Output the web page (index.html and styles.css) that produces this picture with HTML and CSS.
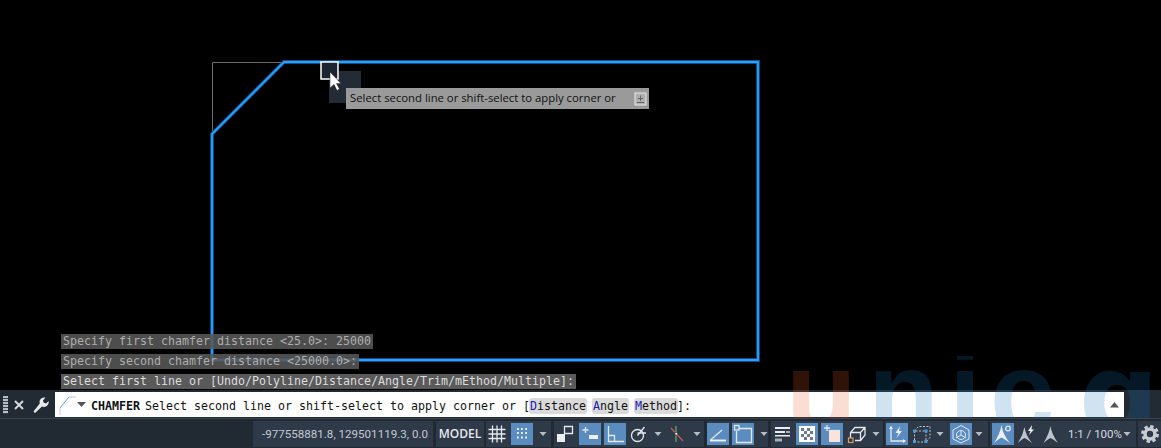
FILE: index.html
```html
<!DOCTYPE html>
<html lang="en">
<head>
<meta charset="utf-8">
<title>CHAMFER</title>
<link rel="stylesheet" href="styles.css">
</head>
<body>
<div class="app">
  <main class="canvas">
    <svg class="drawing" width="1161" height="390" viewBox="0 0 1161 390">
      <path class="ghost" d="M212.500 134V62.500H284"/>
      <path class="edge-outer" d="M212 134L284 62H758V360H212Z"/>
      <path class="edge-inner" d="M212 134L284 62H758V360H212Z"/>
      <rect class="badge" x="329" y="71" width="32" height="32"/>
      <rect class="pickbox" x="321" y="62" width="17" height="17"/>
      <path class="cursor" d="M330 72V88L334 84.500L337 90.500L339.500 89L336.500 83.500H341Z"/>
    </svg>
    <div class="tooltip">
      <span>Select second line or shift-select to apply corner or</span>
      <svg class="tip-icon" width="13" height="14" viewBox="0 0 13 14"><rect x="1" y="1" width="11" height="12" class="tip-box"/><path d="M6.500 3.500V9M4 6.500H9M3 10.500H10" class="tip-plus"/></svg>
    </div>
    <div class="history">
      <div class="hline">Specify first chamfer distance &lt;25.0&gt;: 25000</div>
      <div class="hline">Specify second chamfer distance &lt;25000.0&gt;:</div>
      <div class="hline hline-last">Select first line or [Undo/Polyline/Distance/Angle/Trim/mEthod/Multiple]:</div>
    </div>
  </main>

  <section class="cmdbar">
    <div class="grip"></div>
    <svg class="cmd-x" width="12" height="12" viewBox="0 0 12 12"><path d="M2 2L10 10M10 2L2 10"/></svg>
    <svg class="cmd-wrench" width="18" height="18" viewBox="0 0 18 18"><path d="M1.500 15.500L3 17L10 10.500C12.500 11.500 15.500 10.500 16.500 7.500L16.800 5L14 7.500L11.500 6.500L11 4.500L13.500 1.500C10.500 1 8 2.500 7.500 5.500L7.800 7.500Z"/></svg>
    <div class="cmd-input">
      <svg class="cmd-icon" width="20" height="22" viewBox="0 0 20 22"><path class="ci-gray" d="M2 21V14M11 3H18"/><path class="ci-blue" d="M2 14L11 3"/></svg>
      <svg class="cmd-drop" width="9" height="6" viewBox="0 0 9 6"><path d="M0 0H9L4.500 5Z"/></svg>
      <div class="cmd-text"><b>CHAMFER</b> Select second line or shift-select to apply corner or [<span class="opt"><i>D</i>istance</span> <span class="opt"><i>A</i>ngle</span> <span class="opt"><i>M</i>ethod</span>]:</div>
      <svg class="cmd-up" width="9" height="6" viewBox="0 0 9 6"><path d="M0 5.500H9L4.500 0Z"/></svg>
    </div>
  </section>

  <svg class="watermark" width="400" height="90" viewBox="0 0 400 90" aria-hidden="true">
    <text class="wm-u" x="25" y="77">u</text>
    <text class="wm-b" x="107" y="77">n</text>
    <text class="wm-b" x="188" y="77">i</text>
    <text class="wm-b" x="229" y="77">c</text>
    <text class="wm-b wm-a" x="318" y="77">ɑ</text>
  </svg>

  <footer class="status">
    <div class="group coords">-977558881.8, 129501119.3, 0.0</div>
    <div class="group model">MODEL</div>

    <div class="group g-grid">
      <span class="btn"><svg viewBox="0 0 22 22"><path class="ln" d="M6.500 2.500V19.500M11 2.500V19.500M15.500 2.500V19.500M2.500 6.500H19.500M2.500 11H19.500M2.500 15.500H19.500"/></svg></span>
      <span class="btn on"><svg viewBox="0 0 22 22"><path class="dots" d="M6 6H7.800M10 6H11.800M14.200 6H16M6 10H7.800M10 10H11.800M14.200 10H16M6 14.500H7.800M10 14.500H11.800M14.200 14.500H16"/></svg></span>
      <span class="arrow"><svg viewBox="0 0 14 22"><path class="tri" d="M3.500 9H10.500L7 13Z"/></svg></span>
    </div>

    <div class="group g-b">
      <span class="btn"><svg viewBox="0 0 22 22"><rect class="fl" x="3" y="11" width="8" height="8"/><path class="ln" d="M10.500 11V3.500H18.500V10.500H11"/></svg></span>
      <span class="btn on"><svg viewBox="0 0 22 22"><path class="ln" d="M6.500 4V10M3.500 7H9.500"/><rect class="fl" x="10" y="12" width="9" height="4"/></svg></span>
      <span class="btn on"><svg viewBox="0 0 22 22"><path class="ln" d="M4.500 3V18.500H20M4.500 12.500H10.500V18.500"/></svg></span>
      <span class="btn"><svg viewBox="0 0 22 22"><circle class="ln" cx="8.500" cy="12.500" r="6"/><path class="ln" d="M8.500 12.500L15.500 4M8.500 10H17"/></svg></span>
      <span class="arrow pull"><svg viewBox="0 0 14 22"><path class="tri" d="M3.500 9H10.500L7 13Z"/></svg></span>
      <span class="btn"><svg viewBox="0 0 22 22"><path class="grn" d="M8 3V19"/><path class="red" d="M3 5L15 18"/><rect class="pt" x="7" y="9.500" width="2.500" height="2.500"/></svg></span>
      <span class="arrow pull"><svg viewBox="0 0 14 22"><path class="tri" d="M3.500 9H10.500L7 13Z"/></svg></span>
    </div>

    <div class="group g-c">
      <span class="btn on"><svg viewBox="0 0 22 22"><path class="ln" d="M3.500 17L15 7"/><rect class="fl" x="3" y="16.500" width="16" height="2"/></svg></span>
      <span class="btn on"><svg viewBox="0 0 22 22"><path class="ln" d="M7 5.500H19.500V19.500H4.500V8"/><rect class="ln" x="2.500" y="2.500" width="4.500" height="4.500"/></svg></span>
      <span class="arrow"><svg viewBox="0 0 14 22"><path class="tri" d="M3.500 9H10.500L7 13Z"/></svg></span>
    </div>

    <div class="group g-d">
      <span class="btn"><svg viewBox="0 0 22 22"><rect class="fl" x="4" y="4" width="15" height="2"/><rect class="fl" x="4" y="8" width="10" height="2"/><rect class="fl2" x="15" y="8" width="4" height="2"/><rect class="fl" x="4" y="12" width="15" height="1.500"/><rect class="fl2" x="4" y="15.500" width="7" height="3"/></svg></span>
      <span class="btn on"><svg viewBox="0 0 22 22"><rect class="chk-bg" x="3.500" y="3.500" width="15" height="15"/><path class="chk" d="M5 5H8V8H5ZM11 5H14V8H11ZM8 8H11V11H8ZM14 8H17V11H14ZM5 11H8V14H5ZM11 11H14V14H11ZM8 14H11V17H8ZM14 14H17V17H14Z"/></svg></span>
      <span class="btn on"><svg viewBox="0 0 22 22"><path class="ln" d="M6 2V8M3 5H9"/><path class="ln" d="M7.500 7.500H19"/><rect class="pink" x="8" y="8" width="11" height="11"/></svg></span>
      <span class="btn"><svg viewBox="0 0 22 22"><path class="ln" d="M4.500 15V9.500L9 4.500H19V12L14.500 17.500H9M4.500 9.500H14.500V17.500M14.500 9.500L19 4.500"/><rect class="org" x="2.500" y="15" width="4.500" height="4.500"/></svg></span>
      <span class="arrow tight"><svg viewBox="0 0 14 22"><path class="tri" d="M3.500 9H10.500L7 13Z"/></svg></span>
    </div>

    <div class="group g-e">
      <span class="btn on"><svg viewBox="0 0 22 22"><path class="ln" d="M5 3.500V18H19"/><path class="fln" d="M3 6L5 3L7 6ZM17 16L20 18L17 20Z"/><path class="fln" d="M14 3L9.500 10H12.500L10.500 15L16 8H13Z"/></svg></span>
      <span class="btn"><svg viewBox="0 0 22 22"><path class="dash" d="M3.500 8V19H15V8ZM3.500 8L7.500 3.500H19V14.500L15 19"/><rect class="blue" x="2" y="6.500" width="3" height="3"/><rect class="blue" x="13.500" y="6.500" width="3" height="3"/><rect class="blue" x="2" y="17" width="3" height="3"/><rect class="blue" x="13.500" y="17" width="3" height="3"/></svg></span>
      <span class="arrow pull"><svg viewBox="0 0 14 22"><path class="tri" d="M3.500 9H10.500L7 13Z"/></svg></span>
      <span class="btn on"><svg viewBox="0 0 22 22"><path class="ln thin" d="M11 2.500L19 7V16L11 20L3 16V7ZM11 7V12M6 15L11 12L16 15"/><circle class="ln thin" cx="11" cy="12" r="4.500"/></svg></span>
      <span class="arrow pull"><svg viewBox="0 0 14 22"><path class="tri" d="M3.500 9H10.500L7 13Z"/></svg></span>
    </div>

    <div class="group g-f">
      <span class="btn on"><svg viewBox="0 0 22 22"><path class="fl" d="M9.500 2Q10.500 11 18 20Q12 15.500 9.500 14.500Q7 15.500 2 20Q8 11 9.500 2Z"/><circle class="ln" cx="16" cy="5.500" r="2.300"/></svg></span>
      <span class="btn"><svg viewBox="0 0 22 22"><path class="fl3" d="M7.500 4Q8.500 12 15 20Q10 16 7.500 15Q5 16 1 20Q6 12 7.500 4Z"/><path class="fl" d="M15 2L11 8H13.500L12 12L17 6.500H14.500Z"/></svg></span>
      <span class="btn"><svg viewBox="0 0 22 22"><path class="fl3" d="M8.500 3Q9.500 11 16 20Q11 16 8.500 15Q6 16 1.500 20Q7 11 8.500 3Z"/></svg></span>
      <span class="scale">1:1 / 100%</span>
      <span class="arrow pull"><svg viewBox="0 0 14 22"><path class="tri" d="M3.500 9H10.500L7 13Z"/></svg></span>
    </div>

    <div class="group g-gear">
      <svg class="gear" width="18" height="18" viewBox="0 0 18 18"><circle class="gear-t" cx="9" cy="9" r="7.200"/><circle class="gear-b" cx="9" cy="9" r="5"/></svg>
    </div>
  </footer>
</div>
</body>
</html>
```
FILE: styles.css
```css
* { box-sizing: border-box; }
html, body { margin: 0; padding: 0; background: #000; }
.app {
  position: relative;
  width: 1161px;
  height: 448px;
  overflow: hidden;
  display: flex;
  flex-direction: column;
  background: #000;
}

/* drawing area */
.canvas {
  position: relative;
  height: 390px;
  flex: none;
  display: flex;
  flex-direction: column;
  justify-content: flex-end;
  padding: 0 0 1px 61px;
}
.drawing { position: absolute; left: 0; top: 0; }
.ghost { fill: none; stroke: #6a6a6a; stroke-width: 1; }
.edge-outer { fill: none; stroke: #0e4f92; stroke-width: 3.800; }
.edge-inner { fill: none; stroke: #2ba2f4; stroke-width: 1.800; }
.badge { fill: #232b36; }
.pickbox { fill: #1d2530; stroke: #fff; stroke-width: 1.500; }
.cursor { fill: #fff; stroke: #222; stroke-width: 0.500; }

.tooltip {
  position: absolute;
  left: 346px;
  top: 88px;
  width: 303px;
  height: 21px;
  padding: 0 2px 3px 4px;
  background: #9a9a9a;
  display: flex;
  align-items: center;
  justify-content: space-between;
  font: 11.320px "Open Sans", sans-serif;
  color: #111;
}
.tip-icon { margin-top: 3px; }
.tip-box { fill: #aeb0b0; stroke: #e8e8e8; stroke-width: 1; }
.tip-plus { fill: none; stroke: #666; stroke-width: 1; }

.history {
  position: relative;
  display: flex;
  flex-direction: column;
  align-items: flex-start;
  gap: 5px;
  font: 11.640px/15px "DejaVu Sans Mono", monospace;
}
.hline {
  height: 15px;
  padding: 0 2px;
  background: rgba(88, 88, 88, 0.88);
  color: #aeaeae;
  white-space: pre;
}
.hline-last { color: #dcdcdc; background: #5a5a5a; }

/* command line */
.cmdbar {
  height: 28px;
  flex: none;
  display: flex;
  align-items: center;
  background: #222a34;
  padding: 1px 37px 0 3px;
}
.grip {
  width: 5px;
  height: 18px;
  margin-right: 5px;
  background: repeating-linear-gradient(to bottom, #b9bdc2 0 2px, #3a424d 2px 3px);
}
.cmd-x { margin-right: 7px; }
.cmd-x path { fill: none; stroke: #d5d8dc; stroke-width: 2; }
.cmd-wrench { margin-right: 5px; }
.cmd-wrench path { fill: #e8eaec; }
.cmd-input {
  flex: 1;
  height: 25px;
  background: #fff;
  display: flex;
  align-items: center;
  padding: 0 3px 0 3px;
  font: 11.640px/16px "DejaVu Sans Mono", monospace;
  color: #111;
  white-space: pre;
}
.cmd-icon { flex: none; margin-right: -1px; }
.ci-gray { fill: none; stroke: #c8c8c8; stroke-width: 1; }
.ci-blue { fill: none; stroke: #5aa6e0; stroke-width: 1; }
.cmd-drop { flex: none; margin-right: 5px; }
.cmd-drop path, .cmd-up path { fill: #555; }
.cmd-text { flex: 1; padding-top: 2px; }
.cmd-text b { font-weight: 700; margin-right: -2px; }
.opt {
  background: #dadada;
  border-radius: 3px;
  padding: 1px 1px;
  margin: 0 -1px;
}
.opt i { font-style: normal; color: #1a1ab0; }
.cmd-up { flex: none; margin-right: 2px; }

/* watermark */
.watermark {
  position: absolute;
  left: 761px;
  top: 356px;
  pointer-events: none;
}
.watermark text { font: 700 116px "Liberation Sans", sans-serif; opacity: 0.2; }
.watermark .wm-a { font: 700 112px "DejaVu Sans", sans-serif; }
.wm-u { fill: #eb5a28; }
.wm-b { fill: #1478be; }

/* status bar */
.status {
  position: relative;
  height: 30px;
  flex: none;
  display: flex;
  align-items: center;
  justify-content: flex-end;
  gap: 2px;
  padding: 0;
  background: #212933;
  border-top: 1px solid #3a4350;
  font-family: Roboto, sans-serif;
}
.group {
  height: 26px;
  display: flex;
  align-items: center;
  gap: 3px;
  background: #2f3a49;
}
.coords {
  width: 180px;
  justify-content: center;
  margin-right: 1px;
  padding-left: 4px;
  font-size: 11.600px;
  color: #c3c9d1;
  white-space: nowrap;
}
.model {
  width: 48px;
  justify-content: center;
  font: 600 12px "Open Sans", sans-serif;
  color: #e6e9ed;
}
.g-grid { width: 65px; }
.g-b { width: 150px; margin-left: 1px; }
.g-c { width: 61px; margin-left: 1px; }
.g-d { width: 112px; margin-left: 1px; }
.g-e { width: 103px; padding-left: 1px; }
.g-f { width: 146px; padding-left: 2px; }
.g-gear { width: 23px; justify-content: center; }

.btn {
  width: 22px;
  height: 22px;
  flex: none;
  display: block;
}
.btn.on { background: #5a8cc0; }
.btn svg { display: block; width: 22px; height: 22px; }
.arrow { width: 14px; height: 22px; flex: none; display: block; }
.arrow svg { display: block; width: 14px; height: 22px; }
.arrow.pull { margin-left: -3px; }
.arrow.tight { margin-left: -2px; }
.scale {
  font-size: 11.500px;
  color: #d6dae0;
  white-space: nowrap;
  margin-left: 1px;
  width: 52px;
  flex: none;
}

.ln { fill: none; stroke: #e4e7eb; stroke-width: 1.300; }
.ln.thin { stroke-width: 1; }
.fl { fill: #eceef0; }
.fl2 { fill: #a8aeb6; }
.fl3 { fill: #bfc5cc; }
.fln { fill: #eceef0; stroke: none; }
.tri { fill: #b7bdc5; }
.dots { fill: none; stroke: #eef1f4; stroke-width: 1.800; }
.grn { fill: none; stroke: #5fb56a; stroke-width: 1.200; }
.red { fill: none; stroke: #c25a5a; stroke-width: 1.200; }
.pt { fill: #eee; stroke: #222; stroke-width: 0.500; }
.chk-bg { fill: #fff; stroke: #fff; }
.chk { fill: #6d7a8c; }
.pink { fill: #fbe3da; }
.org { fill: none; stroke: #e09a6a; stroke-width: 1.200; }
.dash { fill: none; stroke: #b8c0c9; stroke-width: 1; stroke-dasharray: 2 1.500; }
.blue { fill: #4f9ad8; }
.gear-t { fill: none; stroke: #c8cdd3; stroke-width: 3.500; stroke-dasharray: 3.200 2.450; }
.gear-b { fill: none; stroke: #c8cdd3; stroke-width: 3.600; }
```
